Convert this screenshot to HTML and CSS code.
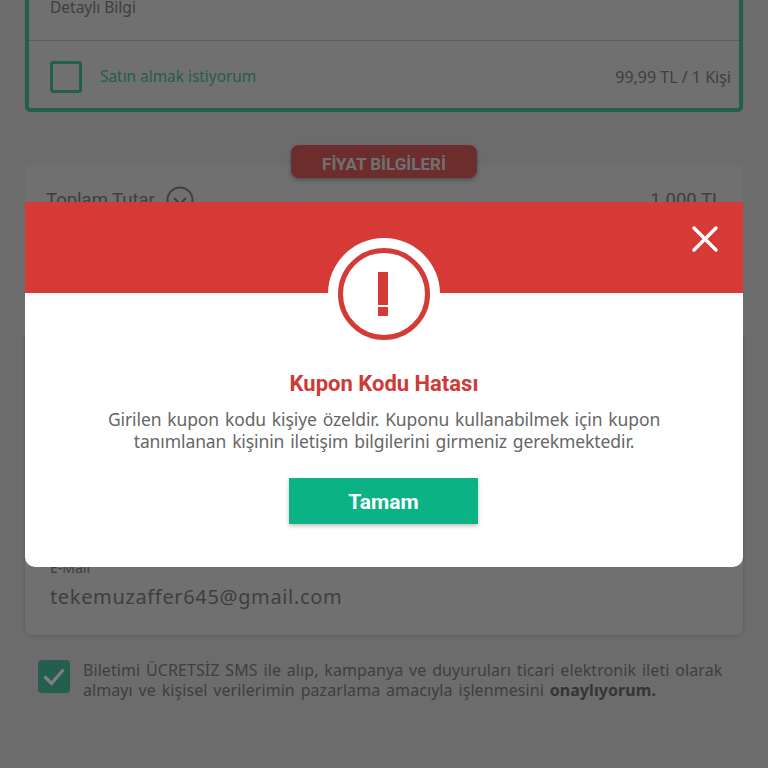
FILE: index.html
```html
<!DOCTYPE html>
<html lang="tr">
<head>
    <meta charset="UTF-8">
    <meta name="viewport" content="width=device-width, initial-scale=1.0">
    <title>Kupon Kodu Hatası</title>
    <link rel="stylesheet" href="styles.css">
</head>
<body>
    <div class="page">
        <div class="extra-card">
            <div class="detail-row">Detaylı Bilgi</div>
            <div class="buy-row">
                <span class="check-empty"></span>
                <span class="buy-label">Satın almak istiyorum</span>
                <span class="buy-price">99,99 TL / 1 Kişi</span>
            </div>
        </div>

        <div class="price-section">
            <div class="price-badge">FİYAT BİLGİLERİ</div>
            <div class="price-card">
                <div class="total-row">
                    <span class="total-label">Toplam Tutar</span>
                    <svg class="total-icon" viewBox="0 0 28 28" width="28" height="28">
                        <circle cx="14" cy="14" r="12.5" fill="none" stroke="#7e7e7e" stroke-width="2"/>
                        <path d="M8 12l6 6 6-6" fill="none" stroke="#7e7e7e" stroke-width="2"/>
                    </svg>
                    <span class="total-value">1.000 TL</span>
                </div>
            </div>
        </div>

        <div class="contact-card">
            <div class="contact-label">E-Mail</div>
            <div class="contact-value">tekemuzaffer645@gmail.com</div>
        </div>

        <div class="consent">
            <span class="check-full">
                <svg viewBox="0 0 32 32" width="32" height="32">
                    <path d="M6.5 16.5l7 7 12-14" fill="none" stroke="#fff" stroke-width="3.2"/>
                </svg>
            </span>
            <p class="consent-text">Biletimi ÜCRETSİZ SMS ile alıp, kampanya ve duyuruları ticari elektronik ileti olarak almayı ve kişisel verilerimin pazarlama amacıyla işlenmesini <b>onaylıyorum.</b></p>
        </div>
    </div>

    <div class="overlay">
        <div class="modal">
            <div class="modal-head">
                <svg class="modal-close" viewBox="0 0 28 28" width="28" height="28">
                    <path d="M3 3l22 22M25 3L3 25" fill="none" stroke="#fff" stroke-width="3.4" stroke-linecap="round"/>
                </svg>
                <div class="modal-badge">
                    <svg viewBox="0 0 92 92" width="92" height="92">
                        <circle cx="46" cy="46" r="43.5" fill="none" stroke="#d63a37" stroke-width="5"/>
                        <rect x="40" y="24" width="10" height="33" fill="#d63a37"/>
                        <rect x="40" y="59" width="10" height="9" fill="#d63a37"/>
                    </svg>
                </div>
            </div>
            <div class="modal-body">
                <h2 class="modal-title">Kupon Kodu Hatası</h2>
                <p class="modal-text">Girilen kupon kodu kişiye özeldir. Kuponu kullanabilmek için kupon tanımlanan kişinin iletişim bilgilerini girmeniz gerekmektedir.</p>
                <button class="modal-btn">Tamam</button>
            </div>
        </div>
    </div>
</body>
</html>
```

FILE: styles.css
```css
html, body {
    height: 100%;
}
body {
    margin: 0;
    overflow: hidden;
    background-color: #d8d8d8;
    font-family: "Noto Sans", sans-serif;
    color: #7e7e7e;
}
.page {
    height: 768px;
    padding: 0 25px;
    box-sizing: border-box;
    overflow: hidden;
}

/* card cut off by the scroll position */
.extra-card {
    height: 153px;
    margin-top: -41px;
    border: 4px solid #48bc9c;
    border-radius: 5px;
    box-sizing: border-box;
    background-color: #e0e0e0;
}
.detail-row {
    height: 78px;
    padding: 34px 21px 0;
    box-sizing: border-box;
    font-size: 15.5px;
    line-height: 20px;
    border-bottom: 1px solid #b8b8b8;
}
.buy-row {
    display: flex;
    align-items: center;
    height: 67px;
    padding: 4px 8px 0 21px;
    box-sizing: border-box;
}
.check-empty {
    width: 32px;
    height: 32px;
    box-sizing: border-box;
    border: 3px solid #48bc9c;
    border-radius: 3px;
}
.buy-label {
    margin-left: 18px;
    font-size: 15.4px;
    color: #48bc9c;
}
.buy-price {
    margin-left: auto;
    font-size: 16px;
}

.price-section {
    margin-top: 33px;
}
.price-badge {
    width: 186px;
    height: 33px;
    margin: 0 auto -13px;
    position: relative;
    border-radius: 8px;
    background-color: #d85a58;
    box-shadow: 0 2px 4px rgba(0, 0, 0, .3);
    color: #e0e0e0;
    font-family: Roboto, sans-serif;
    font-weight: 700;
    font-size: 17px;
    line-height: 38px;
    text-align: center;
}
.price-card {
    height: 150px;
    padding: 21px 21px;
    box-sizing: border-box;
    border-radius: 5px;
    background-color: #e0e0e0;
}
.total-row {
    display: flex;
    align-items: center;
    font-family: Roboto, sans-serif;
    font-size: 18.5px;
}
.total-icon {
    margin-left: 11px;
}
.total-value {
    margin-left: auto;
}

.contact-card {
    height: 306px;
    margin-top: 14px;
    padding: 230px 25px 0;
    box-sizing: border-box;
    border-radius: 5px;
    background-color: #e0e0e0;
    box-shadow: 0 1px 3px rgba(0, 0, 0, .15);
}
.contact-label {
    font-size: 14px;
    line-height: 18px;
}
.contact-value {
    margin-top: 6px;
    font-size: 20px;
    letter-spacing: .65px;
    line-height: 28px;
}

.consent {
    display: flex;
    margin: 25px 0 0 13px;
}
.check-full {
    flex: none;
    width: 32px;
    height: 33px;
    border-radius: 4px;
    background-color: #48bc9c;
}
.consent-text {
    margin: 0 0 0 13px;
    font-size: 16px;
    letter-spacing: .07px;
    word-spacing: 1.6px;
    line-height: 20px;
}
.consent-text b {
    color: #6a6a6a;
}

.overlay {
    position: absolute;
    top: 0;
    left: 0;
    right: 0;
    height: 768px;
    padding: 0 25px;
    box-sizing: border-box;
    display: flex;
    align-items: center;
    background-color: rgba(0, 0, 0, .5);
}
.modal {
    width: 100%;
    height: 365px;
    margin-top: 1px;
    border-radius: 0 0 10px 10px;
    background-color: #fff;
}
.modal-head {
    position: relative;
    display: flex;
    justify-content: flex-end;
    height: 91px;
    padding: 23px 24px 0 0;
    box-sizing: border-box;
    background-color: #d63a37;
}
.modal-close {
    width: 28px;
    height: 28px;
}
.modal-badge {
    position: absolute;
    left: 303px;
    top: 36px;
    width: 112px;
    height: 112px;
    padding: 10px;
    box-sizing: border-box;
    border-radius: 50%;
    background-color: #fff;
}
.modal-badge svg {
    display: block;
}
.modal-body {
    padding-top: 77px;
    text-align: center;
}
.modal-title {
    margin: 0;
    font-family: Roboto, sans-serif;
    font-weight: 700;
    font-size: 22px;
    line-height: 28px;
    color: #cf3a37;
}
.modal-text {
    margin: 10px 40px 0;
    font-size: 17.5px;
    letter-spacing: -.1px;
    word-spacing: 1.4px;
    line-height: 22px;
    color: #666;
}
.modal-btn {
    width: 189px;
    height: 46px;
    margin: 26px 1px 0 0;
    padding-top: 2px;
    border: none;
    background-color: #0bb285;
    box-shadow: 0 2px 4px rgba(0, 0, 0, .25);
    color: #fff;
    font-family: Roboto, sans-serif;
    font-weight: 700;
    font-size: 21px;
}
```
